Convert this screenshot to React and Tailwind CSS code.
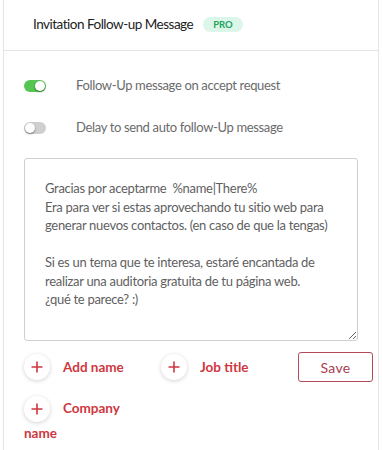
import { useState } from "react";

const message = `Gracias por aceptarme  %name|There%
Era para ver si estas aprovechando tu sitio web para generar nuevos contactos. (en caso de que la tengas)

Si es un tema que te interesa, estaré encantada de realizar una auditoria gratuita de tu página web.
¿qué te parece? :)`;

const Toggle = ({ on, onClick }) => (
  <button
    onClick={onClick}
    className={`relative w-[22px] h-[12px] rounded-full shrink-0 ${on ? "bg-[#55c553]" : "bg-[#cfcfcf]"}`}
  >
    <span
      className={`absolute top-[1px] w-[10px] h-[10px] rounded-full bg-white shadow-[0_1px_2px_rgba(0,0,0,0.45)] ${on ? "left-[11px]" : "left-[1px]"}`}
    />
  </button>
);

const PlusCircle = () => (
  <span className="inline-flex align-middle items-center justify-center w-[26px] h-[26px] rounded-full bg-white shadow-[0_1px_4px_rgba(0,0,0,0.18)] text-[#cf3740]">
    <svg width="12" height="12" viewBox="0 0 12 12">
      <path d="M6 0.5v11M0.5 6h11" stroke="currentColor" strokeWidth="1.6" />
    </svg>
  </span>
);

const App = () => {
  const [followUp, setFollowUp] = useState(true);
  const [delay, setDelay] = useState(false);

  return (
    <div className="mx-[3px] h-[450px] border-x border-[#e4e4e4] bg-white font-['Lato',sans-serif]">
      <div className="h-[51px] border-b border-[#e4e4e4] flex items-center pl-[29px] gap-[10px] pb-[2px]">
        <span className="text-[13.5px] text-[#222] tracking-[-0.5px]">Invitation Follow-up Message</span>
        <span className="h-[15px] px-[10px] rounded-full bg-[#dcf6ea] text-[#22a260] text-[9.5px] font-bold leading-[15px]">
          PRO
        </span>
      </div>

      <div className="pl-[20px] pt-[27px] flex flex-col gap-[26px]">
        <div className="flex items-center h-[16px]">
          <Toggle on={followUp} onClick={() => setFollowUp(!followUp)} />
          <span className="ml-[30px] text-[13px] text-[#6b6b6b] tracking-[-0.35px]">
            Follow-Up message on accept request
          </span>
        </div>
        <div className="flex items-center h-[16px]">
          <Toggle on={delay} onClick={() => setDelay(!delay)} />
          <span className="ml-[30px] text-[13px] text-[#6b6b6b] tracking-[-0.35px]">
            Delay to send auto follow-Up message
          </span>
        </div>
      </div>

      <div className="pl-[20px] pt-[22px]">
        <textarea
          defaultValue={message}
          className="block w-[334px] h-[183px] border border-[#cfcfcf] rounded-[3px] pl-[20px] pr-[14px] pt-[20px] text-[13px] leading-[18.5px] text-[#5f5f5f] tracking-[-0.3px] outline-none font-['Lato',sans-serif]"
        />
      </div>

      <div className="pl-[20px] pt-[11px] flex">
        <div className="w-[118px] flex flex-col gap-[16px]">
          <div className="leading-[26px] text-[13.5px] font-bold text-[#cf3740]">
            <PlusCircle />
            <span className="ml-[13px] align-middle">Add name</span>
          </div>
          <div className="leading-[21px] text-[13.5px] font-bold text-[#cf3740]">
            <PlusCircle />
            <span className="ml-[13px] align-middle">Company name</span>
          </div>
        </div>
        <div className="ml-[19px] w-[137px] leading-[26px] text-[13.5px] font-bold text-[#cf3740]">
          <PlusCircle />
          <span className="ml-[13px] align-middle">Job title</span>
        </div>
        <div>
          <button className="w-[75px] h-[30px] border border-[#b24a5b] rounded-[3px] text-[14px] text-[#a8404f] tracking-[0.3px]">
            Save
          </button>
        </div>
      </div>
    </div>
  );
};

export default App;
